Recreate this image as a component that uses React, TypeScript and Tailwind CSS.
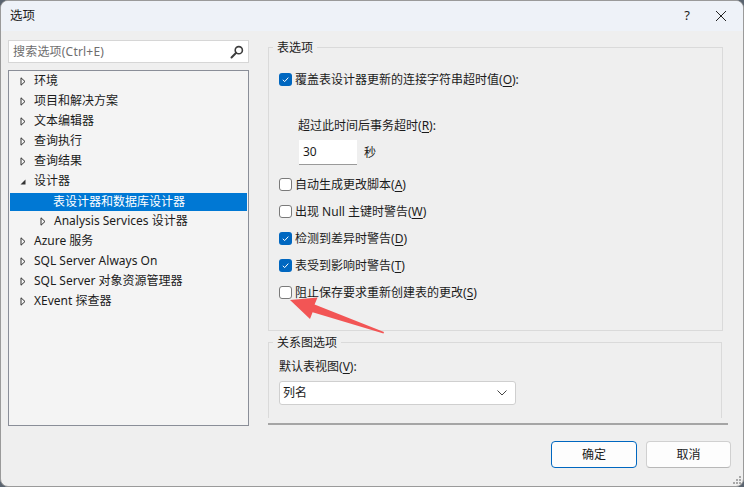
import React from "react";

const font = "font-['Noto_Sans','Noto_Sans_CJK_SC',sans-serif]";

type Node = {
  label: string;
  depth: number;
  state: "closed" | "open" | "leaf";
  selected?: boolean;
};

const tree: Node[] = [
  { label: "环境", depth: 0, state: "closed" },
  { label: "项目和解决方案", depth: 0, state: "closed" },
  { label: "文本编辑器", depth: 0, state: "closed" },
  { label: "查询执行", depth: 0, state: "closed" },
  { label: "查询结果", depth: 0, state: "closed" },
  { label: "设计器", depth: 0, state: "open" },
  { label: "表设计器和数据库设计器", depth: 1, state: "leaf", selected: true },
  { label: "Analysis Services 设计器", depth: 1, state: "closed" },
  { label: "Azure 服务", depth: 0, state: "closed" },
  { label: "SQL Server Always On", depth: 0, state: "closed" },
  { label: "SQL Server 对象资源管理器", depth: 0, state: "closed" },
  { label: "XEvent 探查器", depth: 0, state: "closed" },
];

function Caret({ open }: { open: boolean }) {
  if (open) {
    return (
      <svg width="6" height="9" viewBox="0 0 6 9" className="shrink-0">
        <path d="M5.5 2.5 L5.5 7.5 L0.5 7.5 Z" fill="#333" />
      </svg>
    );
  }
  return (
    <svg width="6" height="9" viewBox="0 0 6 9" className="shrink-0">
      <path d="M1 0.8 L5 4.5 L1 8.2 Z" fill="none" stroke="#333" strokeWidth="1" strokeLinejoin="round" />
    </svg>
  );
}

function TreeRow({ node }: { node: Node }) {
  if (node.selected) {
    return (
      <div className="h-[20px] pt-[2px]">
        <div className="h-[18px] mx-[1px] bg-[#0078d4] text-white flex items-center pl-[43px]">
          {node.label}
        </div>
      </div>
    );
  }
  const pad = node.depth === 0 ? "pl-[11px]" : "pl-[31px]";
  return (
    <div className={`h-[20px] flex items-center gap-[8px] ${pad}`}>
      <Caret open={node.state === "open"} />
      <span>{node.label}</span>
    </div>
  );
}

function Check({ checked }: { checked?: boolean }) {
  if (checked) {
    return (
      <span className="w-[13px] h-[13px] rounded-[3px] bg-[#0067c0] flex items-center justify-center shrink-0">
        <svg width="9" height="9" viewBox="0 0 9 9">
          <path d="M1.8 4.8 L3.7 6.6 L7.3 2.6" fill="none" stroke="white" strokeWidth="1" />
        </svg>
      </span>
    );
  }
  return <span className="w-[13px] h-[13px] rounded-[3px] bg-white border border-[#7a7a7a] shrink-0" />;
}

function Key({ k }: { k: string }) {
  return (
    <>
      (<span className="underline underline-offset-2">{k}</span>)
    </>
  );
}

function CheckRow({ checked, text, k, colon }: { checked?: boolean; text: string; k: string; colon?: boolean }) {
  return (
    <div className="h-[17px] flex items-center gap-[3px]">
      <Check checked={checked} />
      <span>
        {text}
        <Key k={k} />
        {colon ? ":" : ""}
      </span>
    </div>
  );
}

function Arrow() {
  return (
    <svg className="absolute left-0 top-0 pointer-events-none" width="744" height="487">
      <polygon
        points="289,299 316.5,296.5 313.6,303.6 383,331 382.5,332.5 311.6,311.2 309,318"
        fill="#f25555"
      />
    </svg>
  );
}

export default function App() {
  return (
    <div className={`w-[744px] h-[487px] bg-[#5a6470] ${font} text-[12px] text-[#1b1b1b]`}>
      <div className="relative w-[744px] h-[487px] rounded-[8px] border border-[#9a9a9a] bg-[#efefef] overflow-hidden flex flex-col">
        {/* title bar */}
        <div className="h-[30px] bg-[#eef2f8] flex items-center pl-[9px] shrink-0">
          <span className="text-[12.5px]">选项</span>
          <div className="ml-auto flex items-center">
            <span className="w-[24px] text-center text-[13px]">?</span>
            <span className="w-[44px] flex justify-center">
              <svg width="12" height="12" viewBox="0 0 12 12">
                <path d="M1 1 L11 11 M11 1 L1 11" stroke="#222" strokeWidth="1" />
              </svg>
            </span>
          </div>
        </div>

        <div className="flex h-[394px] shrink-0">
          {/* left: search + tree */}
          <div className="pl-[7px] pt-[9px] w-[267px] shrink-0">
            <div className="w-[241px] h-[23px] bg-white border border-[#d6d6d6] flex items-center pl-[4px] pr-[4px]">
              <span className="text-[#6e6e6e] tracking-[0.2px]">搜索选项(Ctrl+E)</span>
              <svg className="ml-auto" width="14" height="14" viewBox="0 0 14 14">
                <circle cx="8.8" cy="5.2" r="3.6" fill="none" stroke="#3d3d3d" strokeWidth="1.6" />
                <path d="M6.2 7.8 L1.5 12.5" stroke="#3d3d3d" strokeWidth="2" strokeLinecap="round" />
              </svg>
            </div>
            <div className="mt-[7px] w-[241px] h-[356px] bg-[#f4f4f4] border border-[#8a8e98]">
              {tree.map((n) => (
                <TreeRow key={n.label} node={n} />
              ))}
            </div>
          </div>

          {/* right: option groups */}
          <div className="w-[460px] shrink-0 flex flex-col">
            <div className="h-[388px] overflow-hidden pt-[8px]">
              <fieldset className="w-[455px] border border-[#dadada] px-[10px] pb-[29px]">
                <legend className="-ml-[6px] px-[4px] leading-[17px]">表选项</legend>
                <div className="pt-[15px] flex flex-col">
                  <CheckRow checked text="覆盖表设计器更新的连接字符串超时值" k="O" colon />
                  <div className="mt-[29px] pl-[19px] h-[17px] flex items-center">
                    <span>
                      超过此时间后事务超时<Key k="R" />:
                    </span>
                  </div>
                  <div className="mt-[6px] pl-[20px] flex items-center gap-[7px]">
                    <div className="w-[58px] h-[25px] bg-white border-b border-[#9a9a9a] flex items-center pl-[4px]">
                      30
                    </div>
                    <span>秒</span>
                  </div>
                  <div className="mt-[11px] flex flex-col gap-[10px]">
                    <CheckRow text="自动生成更改脚本" k="A" />
                    <CheckRow text="出现 Null 主键时警告" k="W" />
                    <CheckRow checked text="检测到差异时警告" k="D" />
                    <CheckRow checked text="表受到影响时警告" k="T" />
                    <CheckRow text="阻止保存要求重新创建表的更改" k="S" />
                  </div>
                </div>
              </fieldset>

              <fieldset className="mt-[3px] w-[454px] border border-[#dadada] px-[10px] pb-[20px]">
                <legend className="-ml-[6px] px-[4px] leading-[17px]">关系图选项</legend>
                <div className="pt-[7px]">
                  <div className="h-[17px] flex items-center">
                    <span>
                      默认表视图<Key k="V" />:
                    </span>
                  </div>
                  <div className="mt-[6px] w-[237px] h-[24px] bg-white border border-[#cfcfcf] rounded-[3px] flex items-center pl-[3px] pr-[8px]">
                    <span>列名</span>
                    <svg className="ml-auto" width="10" height="6" viewBox="0 0 10 6">
                      <path d="M0.5 0.5 L5 5 L9.5 0.5" fill="none" stroke="#444" strokeWidth="1" />
                    </svg>
                  </div>
                </div>
              </fieldset>
            </div>
            <div className="mt-[5px] h-[2px] bg-[#a5a5a5]" />
          </div>
        </div>

        {/* footer buttons */}
        <div className="flex justify-end gap-[9px] pr-[12px] pt-[16px]">
          <button className="w-[86px] h-[27px] rounded-[4px] bg-[#fdfdfd] border border-[#0067c0]">
            确定
          </button>
          <button className="w-[85px] h-[27px] rounded-[4px] bg-[#fdfdfd] border border-[#d0d0d0] border-b-[#b8b8b8]">
            取消
          </button>
        </div>

        {/* size grip */}
        <svg className="absolute right-[2px] bottom-[2px]" width="9" height="9" viewBox="0 0 9 9">
          <rect x="7" y="1" width="2" height="2" fill="#a8a8a8" />
          <rect x="4" y="4" width="2" height="2" fill="#a8a8a8" />
          <rect x="7" y="4" width="2" height="2" fill="#a8a8a8" />
          <rect x="1" y="7" width="2" height="2" fill="#a8a8a8" />
          <rect x="4" y="7" width="2" height="2" fill="#a8a8a8" />
          <rect x="7" y="7" width="2" height="2" fill="#a8a8a8" />
        </svg>

        <Arrow />
      </div>
    </div>
  );
}
